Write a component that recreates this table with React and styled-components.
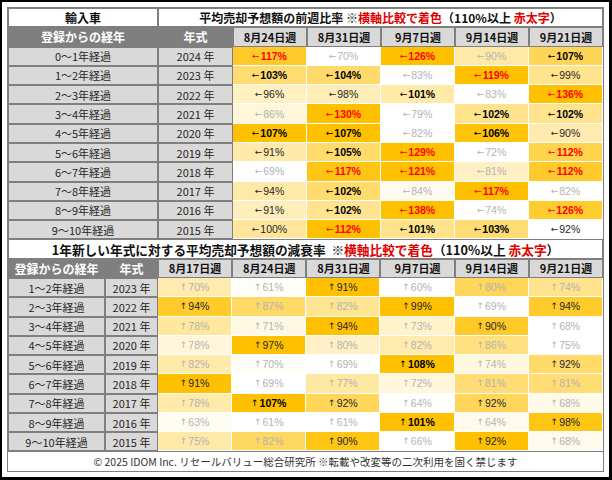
import React from 'react';
import styled, { createGlobalStyle } from 'styled-components';

const GlobalStyle = createGlobalStyle`
  html, body {
    margin: 0;
    padding: 0;
    background: #fff;
  }
  body {
    font-family: "Noto Sans CJK JP", "Liberation Sans", sans-serif;
  }
`;

const ROW_H = '19.29px';

const Frame = styled.div`
  box-sizing: border-box;
  width: 612px;
  height: 480px;
  border: 2px solid #000;
  border-right-width: 3px;
  border-bottom-width: 3px;
  padding: 5px;
`;

const Sheet = styled.div`
  box-sizing: border-box;
  height: 100%;
  border: 1px solid #7f7f7f;
  display: flex;
  flex-direction: column;
`;

const Grid = styled.div`
  display: grid;
  grid-template-columns: ${({ $cols }) => $cols};
  grid-auto-rows: ${ROW_H};
`;

const Cell = styled.div`
  box-sizing: border-box;
  display: flex;
  align-items: center;
  justify-content: center;
  white-space: pre;
  overflow: hidden;
`;

const TitleCell = styled(Cell)`
  grid-column: ${({ $span }) => $span || 'auto'};
  background: #fff;
  box-shadow: inset 0 0 0 1px #7f7f7f;
  font-size: ${({ $size }) => $size || 12}px;
  font-weight: 700;
  color: #111;
`;

const Red = styled.span`
  color: #e00000;
`;

const HeadDark = styled(Cell)`
  background: #7f7f7f;
  color: #fff;
  font-size: 12px;
  font-weight: 700;
`;

const HeadWeek = styled(Cell)`
  background: #d9d9d9;
  box-shadow: inset 0 0 0 1px #7f7f7f;
  color: #111;
  font-size: 11px;
  font-weight: 700;
`;

const Label = styled(Cell)`
  background: #d9d9d9;
  box-shadow: inset 0 0 0 1px #7f7f7f;
  color: #262626;
  font-size: 11px;
`;

const toneColor = {
  red: '#ff0000',
  bold: '#000',
  dark: '#262626',
  gray: '#b3b3b3',
};

const Value = styled(Cell)`
  border-right: 1px solid #fff;
  border-bottom: 1px solid #fff;
  font-family: "Liberation Sans", "DejaVu Sans", sans-serif;
  font-size: 10.5px;
  font-weight: ${({ $tone }) => ($tone === 'red' || $tone === 'bold' ? 700 : 400)};
  color: ${({ $tone }) => toneColor[$tone]};
`;

const Arrow = styled.span`
  font-family: "DejaVu Sans", sans-serif;
  font-size: 9px;
  font-weight: 400;
  margin-right: 1px;
`;

const Footer = styled(Cell)`
  flex: 1;
  border-top: 1px solid #7f7f7f;
  font-size: 10.5px;
  color: #333;
`;

const weeks1 = ['8月24日週', '8月31日週', '9月7日週', '9月14日週', '9月21日週'];
const weeks2 = ['8月17日週', '8月24日週', '8月31日週', '9月7日週', '9月14日週', '9月21日週'];

const weekly = [
  ['0〜1年経過', 2024, [117, 70, 126, 89.6, 107]],
  ['1〜2年経過', 2023, [103, 104, 83, 119, 99]],
  ['2〜3年経過', 2022, [96, 98, 101, 83, 136]],
  ['3〜4年経過', 2021, [86, 130, 79, 102, 102]],
  ['4〜5年経過', 2020, [107, 107, 82, 106, 90]],
  ['5〜6年経過', 2019, [91, 105, 129, 72, 112]],
  ['6〜7年経過', 2018, [69, 117, 121, 81, 112]],
  ['7〜8年経過', 2017, [94, 102, 84, 117, 82]],
  ['8〜9年経過', 2016, [91, 102, 138, 74, 126]],
  ['9〜10年経過', 2015, [99.8, 112, 101, 103, 92]],
];

const decay = [
  ['1〜2年経過', 2023, [70, 61, 91, 60, 80, 74]],
  ['2〜3年経過', 2022, [94, 87, 82, 99, 69, 94]],
  ['3〜4年経過', 2021, [78, 71, 94, 73, 90, 68]],
  ['4〜5年経過', 2020, [78, 97, 80, 82, 86, 75]],
  ['5〜6年経過', 2019, [82, 70, 69, 108, 74, 92]],
  ['6〜7年経過', 2018, [91, 69, 77, 72, 81, 81]],
  ['7〜8年経過', 2017, [78, 107, 92, 64, 92, 68]],
  ['8〜9年経過', 2016, [63, 61, 61, 101, 64, 98]],
  ['9〜10年経過', 2015, [75, 82, 90, 66, 92, 68]],
];

// white -> #ffc000, scaled across each row
const scale = (v, list) => {
  const min = Math.min(...list);
  const max = Math.max(...list);
  const t = max === min ? 0 : (v - min) / (max - min);
  const g = Math.round(255 - 63 * t);
  const b = Math.round(255 - 255 * t);
  return `rgb(255, ${g}, ${b})`;
};

const toneOf = (v) => {
  if (v >= 110) return 'red';
  if (v >= 100) return 'bold';
  if (v >= 90) return 'dark';
  return 'gray';
};

const ValueRow = ({ values, arrow }) =>
  values.map((v, i) => (
    <Value key={i} $tone={toneOf(v)} style={{ background: scale(v, values) }}>
      <Arrow>{arrow}</Arrow>{Math.round(v)}%
    </Value>
  ));

const Suffix = () => (
  <>
    ※<Red>横軸比較で着色</Red>（110%以上{' '}<Red>赤太字</Red>）
  </>
);

export default function App() {
  return (
    <>
      <GlobalStyle />
      <Frame>
        <Sheet>
          <Grid $cols="150px 75px repeat(5, 1fr)">
            <TitleCell>輸入車</TitleCell>
            <TitleCell $span="2 / -1">
              平均売却予想額の前週比率{' '}<Suffix />
            </TitleCell>
            <HeadDark>登録からの経年</HeadDark>
            <HeadDark>年式</HeadDark>
            {weeks1.map((w) => (
              <HeadWeek key={w}>{w}</HeadWeek>
            ))}
            {weekly.map(([label, year, values]) => (
              <React.Fragment key={label}>
                <Label>{label}</Label>
                <Label>{year} 年</Label>
                <ValueRow values={values} arrow="←" />
              </React.Fragment>
            ))}
          </Grid>

          <Grid $cols="97px 53px repeat(6, 1fr)">
            <TitleCell $span="1 / -1" $size={12.7}>
              1年新しい年式に対する平均売却予想額の減衰率{'  '}<Suffix />
            </TitleCell>
            <HeadDark>登録からの経年</HeadDark>
            <HeadDark>年式</HeadDark>
            {weeks2.map((w) => (
              <HeadWeek key={w}>{w}</HeadWeek>
            ))}
            {decay.map(([label, year, values]) => (
              <React.Fragment key={label}>
                <Label>{label}</Label>
                <Label>{year} 年</Label>
                <ValueRow values={values} arrow="↑" />
              </React.Fragment>
            ))}
          </Grid>

          <Footer>© 2025 IDOM Inc. リセールバリュー総合研究所 ※転載や改変等の二次利用を固く禁じます</Footer>
        </Sheet>
      </Frame>
    </>
  );
}
